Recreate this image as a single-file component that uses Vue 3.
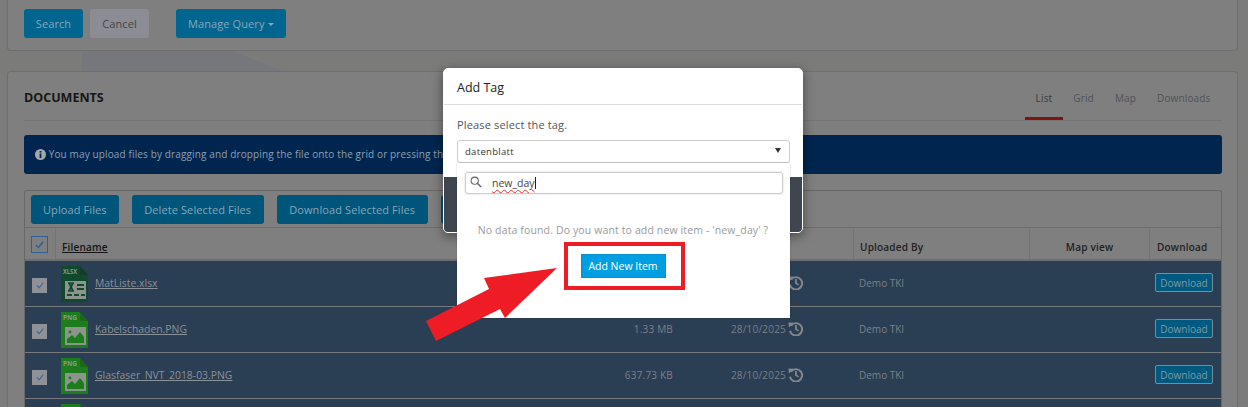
<script setup>
const rows = [
  { name: 'MatListe.xlsx', type: 'XLSX', size: '', date: '', user: 'Demo TKI' },
  { name: 'Kabelschaden.PNG', type: 'PNG', size: '1.33 MB', date: '28/10/2025', user: 'Demo TKI' },
  { name: 'Glasfaser_NVT_2018-03.PNG', type: 'PNG', size: '637.73 KB', date: '28/10/2025', user: 'Demo TKI' },
  { name: '', type: 'PNG', size: '', date: '', user: '' }
]
const tabs = ['List', 'Grid', 'Map', 'Downloads']
</script>

<template>
  <div class="page">
    <div class="decor"></div>
    <section class="panel-top">
      <button class="btn">Search</button>
      <button class="btn cancel">Cancel</button>
      <button class="btn manage">Manage Query <i class="caret"></i></button>
    </section>

    <section class="panel-docs">
      <header class="docs-head">
        <h2>DOCUMENTS</h2>
        <nav class="tabs">
          <a v-for="(t, i) in tabs" :key="t" :class="{ on: i === 0 }">{{ t }}</a>
        </nav>
      </header>

      <div class="alert">
        <svg class="info" viewBox="0 0 11 11" width="11" height="11">
          <circle cx="5.5" cy="5.5" r="5.5" fill="#a3a8ad" />
          <rect x="4.6" y="2" width="1.8" height="1.6" fill="#00264f" />
          <rect x="4.6" y="4.5" width="1.8" height="4.5" fill="#00264f" />
        </svg>
        You may upload files by dragging and dropping the file onto the grid or pressing the upload button.
      </div>

      <div class="grid">
        <div class="toolbar">
          <button class="btn dark">Upload Files</button>
          <button class="btn dark wide">Delete Selected Files</button>
          <button class="btn dark wide">Download Selected Files</button>
          <button class="btn dark">Add Tag</button>
        </div>
        <div class="row head">
          <div class="cell c-check"><span class="hbox"><svg viewBox="0 0 12 12" width="11" height="11"><path d="M2 6.5 5 9.2 10 3" fill="none" stroke="#2f5f95" stroke-width="1.6" /></svg></span></div>
          <div class="cell c-file"><a>Filename</a></div>
          <div class="cell c-size"></div>
          <div class="cell c-date"></div>
          <div class="cell c-user">Uploaded By</div>
          <div class="cell c-map">Map view</div>
          <div class="cell c-dl">Download</div>
        </div>
        <div v-for="(r, i) in rows" :key="i" class="row item">
          <div class="cell c-check"><span class="box"><svg viewBox="0 0 12 12" width="10" height="10"><path d="M2 6.5 5 9.2 10 3" fill="none" stroke="#3d6899" stroke-width="1.4" /></svg></span></div>
          <div class="cell c-file">
            <svg class="ficon" viewBox="0 0 27 36" width="27" height="36">
              <path d="M0 0H19L27 9V36H0Z" :fill="r.type === 'XLSX' ? '#11492f' : '#1d7d1d'" />
              <path d="M19 0V9H27Z" fill="#000" fill-opacity=".15" />
              <text x="2" y="7.5" class="ftype" textLength="14" lengthAdjust="spacingAndGlyphs">{{ r.type }}</text>
              <rect x="4" y="15" width="21" height="18" fill="#8d948d" />
              <template v-if="r.type === 'XLSX'">
                <path d="M7 17H13M7 25H13M8 17 12 25M12 17 8 25" fill="none" stroke="#11492f" stroke-width="1.7" />
                <path d="M16 19H23M16 23H23M6 29H11M13 29H18M20 29H24" stroke="#11492f" stroke-width="2" />
              </template>
              <template v-else>
                <path d="M6 31V27L11 23 14 26 19 20 23 25V31Z" fill="#1d7d1d" />
                <circle cx="9" cy="20" r="1.4" fill="#1d7d1d" />
              </template>
            </svg>
            <a>{{ r.name }}</a>
          </div>
          <div class="cell c-size">{{ r.size }}</div>
          <div class="cell c-date">
            <span>{{ r.date }}</span>
            <svg v-if="r.user" class="hist" viewBox="0 0 17 17" width="15" height="15">
              <path d="M3.4 5.2A7 7 0 1 1 2.2 11" fill="none" stroke="#85898c" stroke-width="2.2" />
              <path d="M0.6 1.6 6.6 1.9 1 7.4Z" fill="#85898c" />
              <path d="M9 4.5V9.2L12 11.2" fill="none" stroke="#85898c" stroke-width="2" />
            </svg>
          </div>
          <div class="cell c-user">{{ r.user }}</div>
          <div class="cell c-map"></div>
          <div class="cell c-dl"><button v-if="r.user" class="mini">Download</button></div>
        </div>
      </div>
    </section>

    <div class="modal">
      <div class="m-title">Add Tag</div>
      <div class="m-body">
        <p>Please select the tag.</p>
        <div class="select"><span>datenblatt</span><i class="down"></i></div>
      </div>
      <div class="m-foot"></div>
    </div>

    <div class="dropdown">
      <div class="search">
        <svg viewBox="0 0 14 14" width="12" height="12">
          <circle cx="5.5" cy="5.5" r="4.2" fill="none" stroke="#666" stroke-width="1.2" />
          <path d="M8.5 8.5 13 12.8" stroke="#666" stroke-width="1.8" />
        </svg>
        <span class="typed">new_day</span><i class="cursor"></i>
      </div>
      <p class="empty">No data found. Do you want to add new item - 'new_day' ?</p>
      <div class="add-wrap"><button class="add">Add New Item</button></div>
    </div>

    <div class="redbox"></div>
    <svg class="arrow" viewBox="0 0 1248 407" width="1248" height="407">
      <polygon points="557,268 484,278 489,289 426,321 436,341 500,309 505,318" fill="#ee1c25" />
    </svg>
  </div>
</template>

<style>
html, body { margin: 0; padding: 0; overflow: hidden; }
</style>

<style scoped>
.page {
  position: relative;
  width: 1248px;
  height: 407px;
  overflow: hidden;
  background: #7b7c7a;
  font-family: "Open Sans", "Noto Sans", sans-serif;
  font-size: 10px;
  color: #1a1a1a;
}
.decor {
  position: absolute;
  inset: 0;
  background: #76777c;
  clip-path: polygon(82px 50px, 230px 50px, 285px 72px, 82px 72px);
}
.panel-top, .panel-docs {
  position: relative;
  background: #7f7f7f;
  border: 1px solid #6f6f6f;
  box-sizing: border-box;
}
.panel-top {
  margin: 0 10px 20px 7px;
  height: 51px;
  padding: 9px 16px 0;
  border-top: 0;
  border-radius: 0 0 4px 4px;
  display: flex;
  align-items: flex-start;
}
.panel-docs {
  margin: 0 10px 0 7px;
  height: 336px;
  padding: 0 15px 0 16px;
  border-bottom: 0;
  border-radius: 4px 4px 0 0;
}
.btn {
  min-width: 59px;
  height: 29px;
  border: 0;
  border-radius: 3px;
  background: #00658f;
  color: #86a8bc;
  font: 11px "Open Sans", sans-serif;
  letter-spacing: .1px;
  padding: 0 11.5px;
  white-space: nowrap;
}
.cancel { background: #8c8d94; color: #444; margin-left: 7px; }
.manage { margin-left: 27px; padding: 0 12px; }
.caret {
  display: inline-block;
  border: 3px solid transparent;
  border-top-color: #86a8bc;
  border-bottom: 0;
  vertical-align: 2px;
}
.docs-head {
  display: flex;
  justify-content: space-between;
  height: 49px;
  box-sizing: border-box;
  border-bottom: 1px solid #757575;
}
.docs-head h2 {
  margin: 17px 0 0;
  font-size: 12.5px;
  line-height: 18px;
  font-weight: 700;
  color: #171717;
}
.tabs { display: flex; height: 48px; margin-right: 1px; }
.tabs a {
  box-sizing: border-box;
  height: 48px;
  padding: 19px 10.5px 0;
  line-height: 14px;
  font-size: 10px;
  color: #4f5258;
  letter-spacing: .15px;
}
.tabs a.on { color: #3a3a3a; border-bottom: 3px solid #7d1610; }
.alert {
  margin-top: 14px;
  height: 39px;
  border-radius: 3px;
  background: #00264f;
  color: #8ca0b4;
  font-size: 10px;
  letter-spacing: .13px;
  line-height: 39px;
  padding-left: 11px;
  white-space: nowrap;
}
.info { vertical-align: -1.5px; }
.grid {
  margin-top: 16px;
  border: 1px solid #686868;
  border-bottom: 0;
  border-radius: 3px 3px 0 0;
}
.toolbar {
  display: flex;
  gap: 13px;
  height: 37px;
  padding: 4px 6px 0;
  box-sizing: border-box;
  border-bottom: 1px solid #6c6c6c;
}
.btn.dark { background: #00557a; color: #86a5b8; padding: 0 12px; }
.btn.dark.wide { padding: 0 12.5px; }
.row {
  display: grid;
  grid-template-columns: 30px 535px 90px 173px 176px 120px 72px;
  box-sizing: border-box;
}
.cell {
  box-sizing: border-box;
  display: flex;
  align-items: center;
  min-width: 0;
}
.head {
  height: 33px;
  font-weight: 600;
  font-size: 10px;
  color: #222;
  border-bottom: 2px solid #6e6e6e;
  letter-spacing: .2px;
}
.head .cell { border-left: 1px solid #757575; padding-top: 6px; }
.head .cell:first-child { border-left: 0; padding-top: 1px; }
.head .c-size, .head .c-date { border-left: 0; }
.head .c-file a { color: #141414; text-decoration: underline; font-weight: 600; padding-left: 6px; }
.head .c-user { padding-left: 6px; }
.head .c-map { justify-content: center; }
.head .c-dl { padding-left: 7px; }
.hbox {
  display: flex;
  align-items: center;
  justify-content: center;
  width: 17px;
  height: 17px;
  margin-left: 6px;
  border: 1px solid #2f5f95;
  box-sizing: border-box;
}
.item {
  height: 46px;
  background: #2a3e54;
  border-bottom: 1px solid #76797c;
}
.item .cell { color: #7b8088; padding-bottom: 2px; }
.item .c-check { padding-bottom: 0; }
.box {
  display: flex;
  align-items: center;
  justify-content: center;
  width: 15px;
  height: 15px;
  margin: 3px 0 0 7px;
  background: #8f9196;
}
.item .c-file a { text-decoration: underline; font-size: 10.4px; color: #8a9199; }
.ficon { margin: 2px 7px 0 6px; flex: none; }
.ftype { font: 700 6.5px "Open Sans", sans-serif; fill: #8d948d; }
.item .c-size { justify-content: flex-end; padding-right: 7px; letter-spacing: .2px; }
.item .c-date { justify-content: flex-end; padding-right: 50px; gap: 2px; letter-spacing: .2px; }
.hist { flex: none; }
.item .c-user { padding-left: 6px; }
.item .c-dl { padding-left: 6px; }
.mini {
  width: 58px;
  height: 19px;
  padding: 0;
  border: 1px solid #7b8c99;
  border-radius: 2px;
  background: #00597f;
  color: #7f99a8;
  font: 10px "Open Sans", sans-serif;
}
.modal {
  position: absolute;
  left: 443px;
  top: 68px;
  width: 360px;
  height: 165px;
  box-sizing: border-box;
  background: #fff;
  border-radius: 5px;
  border: 1px solid #fff;
  overflow: hidden;
  display: flex;
  flex-direction: column;
  box-shadow: 0 3px 12px rgba(0, 0, 0, .45);
}
.m-title {
  height: 36px;
  box-sizing: border-box;
  padding-left: 13px;
  line-height: 37px;
  font-size: 12.5px;
  color: #222;
  border-bottom: 1px solid #ddd;
  flex: none;
}
.m-body { padding: 13px 13px 0; flex: none; height: 72px; box-sizing: border-box; }
.m-body p { margin: 0 0 8px; font-size: 11px; letter-spacing: .15px; line-height: 14px; color: #555; }
.select {
  display: flex;
  align-items: center;
  justify-content: space-between;
  width: 333px;
  height: 23px;
  box-sizing: border-box;
  padding: 0 8px 0 7px;
  border: 1px solid #ccc;
  border-radius: 3px;
  font-size: 9.5px;
  letter-spacing: .3px;
  color: #333;
}
.down {
  width: 0;
  border: 3.5px solid transparent;
  border-top: 5px solid #333;
  border-bottom: 0;
  margin-top: -2px;
}
.m-foot { flex: 1; background: #3f4650; }
.dropdown {
  position: absolute;
  left: 457px;
  top: 163px;
  width: 333px;
  height: 155px;
  box-sizing: border-box;
  padding: 9px 7px 0 8px;
  background: #fff;
  box-shadow: 0 0 2px rgba(0, 0, 0, .2);
}
.search {
  display: flex;
  align-items: center;
  height: 22px;
  box-sizing: border-box;
  padding: 0 0 0 4px;
  border: 1px solid #ccc;
  border-radius: 3px;
  box-shadow: 0 0 2px rgba(0, 0, 0, .2);
}
.search svg { margin-top: -3px; }
.typed {
  margin-left: 10px;
  font-size: 10.5px;
  color: #444;
  text-decoration: underline wavy #e03030 1px;
  text-underline-offset: 2px;
}
.cursor { width: 1px; height: 12px; background: #222; }
.empty {
  margin: 28px 2px 0 0;
  text-align: center;
  font-size: 10.5px;
  letter-spacing: .13px;
  line-height: 16px;
  color: #9a9a9a;
}
.add-wrap { display: flex; justify-content: center; margin: 16px 2px 0 0; }
.add {
  width: 85px;
  height: 24px;
  padding: 0;
  border: 1px solid #0a8fd0;
  background: #009fe3;
  color: #fff;
  font: 10.5px "Open Sans", sans-serif;
}
.redbox {
  position: absolute;
  left: 564px;
  top: 242px;
  width: 121px;
  height: 48px;
  box-sizing: border-box;
  border: 4px solid #ee1c25;
}
.arrow { position: absolute; left: 0; top: 0; pointer-events: none; }
</style>
